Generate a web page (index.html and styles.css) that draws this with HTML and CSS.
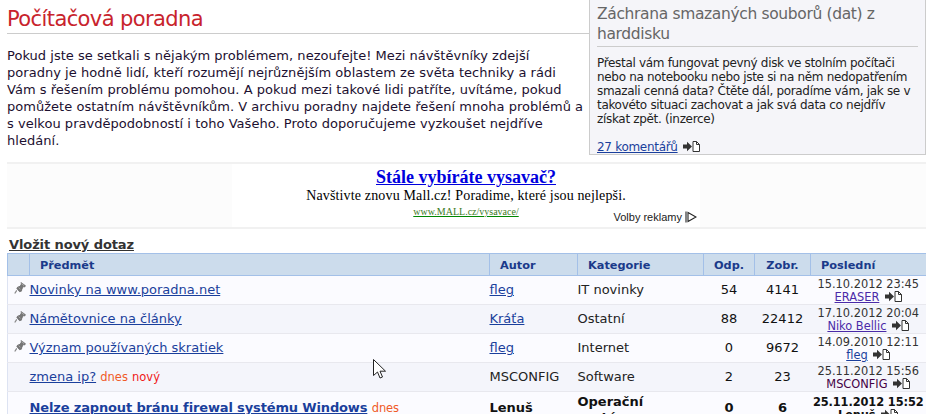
FILE: index.html
```html
<!DOCTYPE html>
<html lang="cs">
<head>
<meta charset="utf-8">
<title>Počítačová poradna</title>
<link rel="stylesheet" href="styles.css">
</head>
<body>
<svg class="defs" width="0" height="0">
  <symbol id="go" viewBox="0 0 17 11">
    <path d="M0 3.500h4V.8L9 5.500 4 10.200V7.500H0z" fill="#333"/>
    <path d="M10 .5h3.500l3 3v7H10z" fill="#fff" stroke="#333"/>
    <path d="M13.500 .5v3h3" fill="none" stroke="#333"/>
  </symbol>
  <symbol id="pin" viewBox="0 0 13 13">
    <path d="M7.500 .5l5 3.500-1 1.500-1.500-.5-1.500 3-.5 2-2 .5-3-3.500 1-1.500 2.500-.8 1.500-2.500z" fill="#777" stroke="#555" stroke-width=".6"/>
    <path d="M3 9L.8 12.500" stroke="#888" stroke-width="1.300"/>
    <path d="M8 1.800l3 2.200M5 6l2 2" stroke="#aaa"/>
  </symbol>
</svg>
<div class="top">
  <main class="intro">
    <h1>Počítačová poradna</h1>
    <p>Pokud jste se setkali s nějakým problémem, nezoufejte! Mezi návštěvníky zdejší poradny je hodně lidí, kteří rozumějí nejrůznějším oblastem ze světa techniky a rádi Vám s řešením problému pomohou. A pokud mezi takové lidi patříte, uvítáme, pokud pomůžete ostatním návštěvníkům. V archivu poradny najdete řešení mnoha problémů a s velkou pravděpodobností i toho Vašeho. Proto doporučujeme vyzkoušet nejdříve hledání.</p>
  </main>
  <aside class="promo">
    <h2>Záchrana smazaných souborů (dat) z harddisku</h2>
    <p>Přestal vám fungovat pevný disk ve stolním počítači nebo na notebooku nebo jste si na něm nedopatřením smazali cenná data? Čtěte dál, poradíme vám, jak se v takovéto situaci zachovat a jak svá data co nejdřív získat zpět. (inzerce)</p>
    <div class="promo-link"><a href="#">27 komentářů</a> <svg class="go"><use href="#go"/></svg></div>
  </aside>
</div>
<section class="ad">
  <div class="ad-inner">
    <a class="ad-title" href="#">Stále vybíráte vysavač?</a>
    <div class="ad-text">Navštivte znovu Mall.cz! Poradime, které jsou nejlepši.</div>
    <a class="ad-url" href="#">www.MALL.cz/vysavace/</a>
    <span class="ad-choice">Volby reklamy <svg class="ad-icon" viewBox="0 0 12 12"><path d="M1 .5v11M3 1.500L11 6 3 10.500z" fill="none" stroke="#222" stroke-width="1.100"/></svg></span>
  </div>
</section>
<a class="new" href="#">Vložit nový dotaz</a>
<table class="board">
  <colgroup><col class="c0"><col class="c1"><col class="c2"><col class="c3"><col class="c4"><col class="c5"><col class="c6"></colgroup>
  <thead>
    <tr><th></th><th>Předmět</th><th>Autor</th><th>Kategorie</th><th class="mid">Odp.</th><th class="mid">Zobr.</th><th>Poslední</th></tr>
  </thead>
  <tbody>
    <tr>
      <td class="ic"><svg class="pin"><use href="#pin"/></svg></td>
      <td><a href="#">Novinky na www.poradna.net</a></td><td><a href="#">fleg</a></td><td>IT novinky</td><td class="num">54</td><td class="num">4141</td>
      <td class="last">15.10.2012 23:45<br><a class="seen" href="#">ERASER</a> <svg class="go"><use href="#go"/></svg></td>
    </tr>
    <tr class="alt">
      <td class="ic"><svg class="pin"><use href="#pin"/></svg></td>
      <td><a href="#">Námětovnice na články</a></td><td><a href="#">Kráťa</a></td><td>Ostatní</td><td class="num">88</td><td class="num">22412</td>
      <td class="last">17.10.2012 20:04<br><a class="seen" href="#">Niko Bellic</a> <svg class="go"><use href="#go"/></svg></td>
    </tr>
    <tr>
      <td class="ic"><svg class="pin"><use href="#pin"/></svg></td>
      <td><a href="#">Význam používaných skratiek</a></td><td><a href="#">fleg</a></td><td>Internet</td><td class="num">0</td><td class="num">9672</td>
      <td class="last">14.09.2010 12:11<br><a href="#">fleg</a> <svg class="go"><use href="#go"/></svg></td>
    </tr>
    <tr class="alt">
      <td class="ic"></td>
      <td><a href="#">zmena ip?</a> <small class="today">dnes</small> <small class="fresh">nový</small></td><td>MSCONFIG</td><td>Software</td><td class="num">2</td><td class="num">23</td>
      <td class="last">25.11.2012 15:56<br><span class="plain">MSCONFIG</span> <svg class="go"><use href="#go"/></svg></td>
    </tr>
    <tr class="unread">
      <td class="ic"></td>
      <td><a href="#">Nelze zapnout bránu firewal systému Windows</a> <small class="today">dnes</small></td><td>Lenuš</td><td>Operační systémy</td><td class="num">0</td><td class="num">6</td>
      <td class="last">25.11.2012 15:52<br><span>Lenuš</span> <svg class="go"><use href="#go"/></svg></td>
    </tr>
  </tbody>
</table>
<svg class="cursor" viewBox="0 0 13 20"><path d="M.5 .5v16l4-3.500 2.500 6 2.500-1-2.500-5.800h5.500z" fill="#fff" stroke="#222"/></svg>
</body>
</html>
```
FILE: styles.css
```css
* { box-sizing: border-box; }
html, body { height: 414px; overflow: hidden; }
body { margin: 0; background: #fff; color: #111; font: 13px/17px "DejaVu Sans", Verdana, sans-serif; position: relative; }
a { color: #1a3f9c; }
.defs { position: absolute; }
.top { display: flex; height: 162px; align-items: flex-start; padding-left: 7px; }
.intro { width: 582px; flex: none; }
h1 { margin: 0; height: 34px; padding-top: 4px; font: 21px/30px "DejaVu Sans", sans-serif; letter-spacing: -.6px; color: #c8232c; border-bottom: 1px solid #ccc; }
.intro p { max-width: 578px; margin: 13px 0 0; letter-spacing: .03px; color: #1c1030; }
.promo { flex: none; width: 337px; height: 155px; background: #f5f5f9; border: 1px solid #ccc; border-top: 0; padding: 0 7px; color: #333; }
.promo h2 { margin: 0; padding: 4px 0 2px; font: 15.500px/20px "DejaVu Sans", sans-serif; letter-spacing: -.35px; color: #666; border-bottom: 1px solid #ccc; }
.promo p { margin: 9px 0 0; font-size: 12px; line-height: 14px; letter-spacing: -.32px; color: #222; }
.promo-link { margin-top: 13px; font-size: 12px; letter-spacing: -.3px; line-height: 16px; }
.go { width: 17px; height: 11px; margin-left: 2px; vertical-align: -1px; }
.ad { height: 67px; margin-left: 7px; border-top: 2px solid #f1f1f1; border-bottom: 2px solid #f1f1f1; background: #fcfcfc; }
.ad-inner { position: relative; width: 468px; height: 63px; margin-left: 225px; padding-top: 3px; background: #fff; text-align: center; font-family: "Liberation Serif", serif; }
.ad-title { display: block; font: bold 18px/20px "Liberation Serif", serif; color: #00d; }
.ad-text { font-size: 14px; line-height: 18px; letter-spacing: .15px; color: #000; }
.ad-url { display: block; font-size: 10px; line-height: 14px; color: #3c7a1e; text-decoration-color: #080; }
.ad-choice { position: absolute; right: 3px; bottom: 3px; font: 11px/14px "Liberation Sans", sans-serif; color: #222; }
.ad-icon { width: 12px; height: 12px; vertical-align: -2px; }
.new { display: block; margin: 8px 0 0 9px; padding-bottom: 1px; font-weight: bold; font-size: 13px; line-height: 15px; letter-spacing: -.1px; color: #333; }
.board { table-layout: fixed; width: 919px; margin-left: 7px; border-collapse: collapse; }
.c0 { width: 22px; } .c1 { width: 460px; } .c2 { width: 88px; } .c3 { width: 126px; } .c4 { width: 51px; } .c5 { width: 56px; } .c6 { width: 116px; }
th { height: 22px; padding: 2px 0 0 10px; background: #ccdcec; border: 1px solid #a3c0e8; font-size: 11.300px; text-align: left; color: #1a3a8a; }
th.mid { padding: 2px 0 0; text-align: center; }
td { height: 29px; padding: 0; background: #fbfbff; border-bottom: 1px solid #e8e8ee; line-height: 16px; color: #222; }
td:first-child { border-left: 1px solid #dde3f2; }
td:last-child { border-right: 1px solid #dde3f2; }
tr.alt td { background: #f4f5fb; }
.ic { padding-left: 6px; }
.pin { display: block; width: 12px; height: 12px; margin-top: -4px; }
.num { text-align: center; color: #111; }
.last { padding-top: 1px; text-align: center; font-size: 11.400px; line-height: 13px; color: #333; white-space: nowrap; }
.plain { color: #404; }
.seen { color: #4a2aa8; }
small { font-size: 11.500px; }
.today { color: #f05a28; }
.fresh { color: #f01818; }
.unread td { font-weight: bold; color: #111; vertical-align: top; padding-top: 2px; }
.unread td:nth-child(2) { letter-spacing: -.14px; }
.unread td:nth-child(2), .unread td:nth-child(3), .unread .num { padding-top: 8px; }
.unread .last { letter-spacing: -.1px; padding-top: 4px; }
.unread small { font-weight: normal; }
.cursor { position: absolute; left: 373px; top: 359px; width: 13px; height: 20px; }
```
